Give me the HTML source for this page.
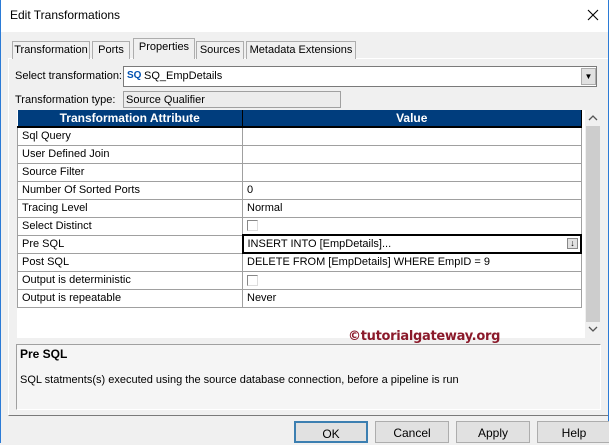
<!DOCTYPE html>
<html><head><meta charset="utf-8"><style>
*{margin:0;padding:0;box-sizing:border-box}
body{width:609px;height:443px;overflow:hidden;background:#f0f0f0;font-family:"Liberation Sans",Arial,sans-serif;font-size:11px;color:#000;position:relative}
.a{position:absolute}
.tab{position:absolute;top:41px;height:18px;border:1px solid #adadad;border-bottom:none;background:#f0f0f0;padding-top:2px;font-size:11px;white-space:nowrap;text-align:center;overflow:hidden}
table{border-collapse:collapse;position:absolute;left:17px;top:110px;width:565px}
td{border:1px solid #a0a0a0;height:18px;padding:0 4px;font-size:11px;background:#fff;white-space:nowrap}
th{background:#003d7d;color:#fff;height:17px;font-size:12px;font-weight:bold;border-right:1px solid #000;border-bottom:2px solid #000}
.cb{display:inline-block;width:11px;height:11px;border:1px solid #888;border-right-color:#ddd;border-bottom-color:#ddd;vertical-align:middle}
.btn{position:absolute;top:421px;height:22px;border:1px solid #adadad;background:#e1e1e1;text-align:center;font-size:12px;line-height:22px}
</style></head><body>
<div class="a" style="left:0;top:0;width:609px;height:32px;background:#fff"></div>
<div class="a" style="left:0;top:0;width:1px;height:443px;background:#2b7bd6"></div>
<div class="a" style="left:608px;top:0;width:1px;height:443px;background:#2b7bd6"></div>
<div class="a" style="left:10px;top:8px;font-size:12px">Edit Transformations</div>
<svg class="a" style="left:587px;top:9px" width="12" height="12"><path d="M1 1L11 11M11 1L1 11" stroke="#000" stroke-width="1.1"/></svg>

<div class="a" style="left:8px;top:58px;width:600px;height:358px;border-top:1px solid #fff;border-left:1px solid #fff;border-bottom:1px solid #7a7a7a"></div>
<div class="tab" style="left:12px;width:78px">Transformation</div>
<div class="tab" style="left:92px;width:38px">Ports</div>
<div class="tab" style="left:133px;top:38px;height:21px;width:62px;z-index:2">Properties</div>
<div class="tab" style="left:196px;width:48px">Sources</div>
<div class="tab" style="left:246px;width:110px">Metadata Extensions</div>

<div class="a" style="left:15px;top:70px">Select transformation:</div>
<div class="a" style="left:123px;top:66px;width:474px;height:21px;border:1px solid #7a7a7a;background:#fff"></div>
<div class="a" style="left:127px;top:70px;color:#0050b0;font-weight:bold;font-size:10px">SQ</div>
<div class="a" style="left:144px;top:70px">SQ_EmpDetails</div>
<div class="a" style="left:581px;top:68px;width:15px;height:17px;background:#e1e1e1;border:1px solid #adadad;font-size:8px;text-align:center;line-height:16px">▼</div>
<div class="a" style="left:15px;top:94px">Transformation type:</div>
<div class="a" style="left:123px;top:91px;width:218px;height:17px;border:1px solid #a0a0a0;background:#ececec;padding:2px 2px 0">Source Qualifier</div>

<div class="a" style="left:17px;top:110px;width:568px;height:228px;background:#fff"></div>
<table>
<tr><th style="width:225px">Transformation Attribute</th><th>Value</th></tr>
<tr><td>Sql Query</td><td></td></tr>
<tr><td>User Defined Join</td><td></td></tr>
<tr><td>Source Filter</td><td></td></tr>
<tr><td>Number Of Sorted Ports</td><td>0</td></tr>
<tr><td>Tracing Level</td><td>Normal</td></tr>
<tr><td>Select Distinct</td><td><span class="cb"></span></td></tr>
<tr><td>Pre SQL</td><td style="border:2px solid #000;position:relative">INSERT INTO [EmpDetails]...<span style="position:absolute;right:2px;top:2px;width:11px;height:11px;background:#e1e1e1;border:1px solid #888;font-size:9px;line-height:9px;text-align:center;font-weight:bold">↓</span></td></tr>
<tr><td>Post SQL</td><td>DELETE FROM [EmpDetails] WHERE EmpID = 9</td></tr>
<tr><td>Output is deterministic</td><td><span class="cb"></span></td></tr>
<tr><td>Output is repeatable</td><td>Never</td></tr>
</table>
<div class="a" style="left:585px;top:110px;width:16px;height:228px;background:#f0f0f0"></div>
<div class="a" style="left:586px;top:126px;width:14px;height:196px;background:#cdcdcd"></div>
<svg class="a" style="left:588px;top:114px" width="10" height="8"><path d="M1 6L5 2L9 6" stroke="#555" fill="none" stroke-width="1.3"/></svg>
<svg class="a" style="left:588px;top:325px" width="10" height="8"><path d="M1 2L5 6L9 2" stroke="#555" fill="none" stroke-width="1.3"/></svg>
<div class="a" style="left:348px;top:329px;font-size:13px;font-weight:bold;color:#8b1a2b;font-family:'DejaVu Sans',sans-serif;letter-spacing:-0.3px">©tutorialgateway.org</div>

<div class="a" style="left:16px;top:344px;width:585px;height:66px;border:1px solid #a0a0a0;border-right-color:#fff;border-bottom-color:#fff;background:#f5f5f5"></div>
<div class="a" style="left:20px;top:347px;font-weight:bold;font-size:12px">Pre SQL</div>
<div class="a" style="left:20px;top:374px">SQL statments(s) executed using the source database connection, before a pipeline is run</div>

<div class="btn" style="left:294px;width:74px;border:2px solid #3c7fb1">OK</div>
<div class="btn" style="left:375px;width:74px">Cancel</div>
<div class="btn" style="left:456px;width:74px">Apply</div>
<div class="btn" style="left:537px;width:74px">Help</div>
</body></html>
